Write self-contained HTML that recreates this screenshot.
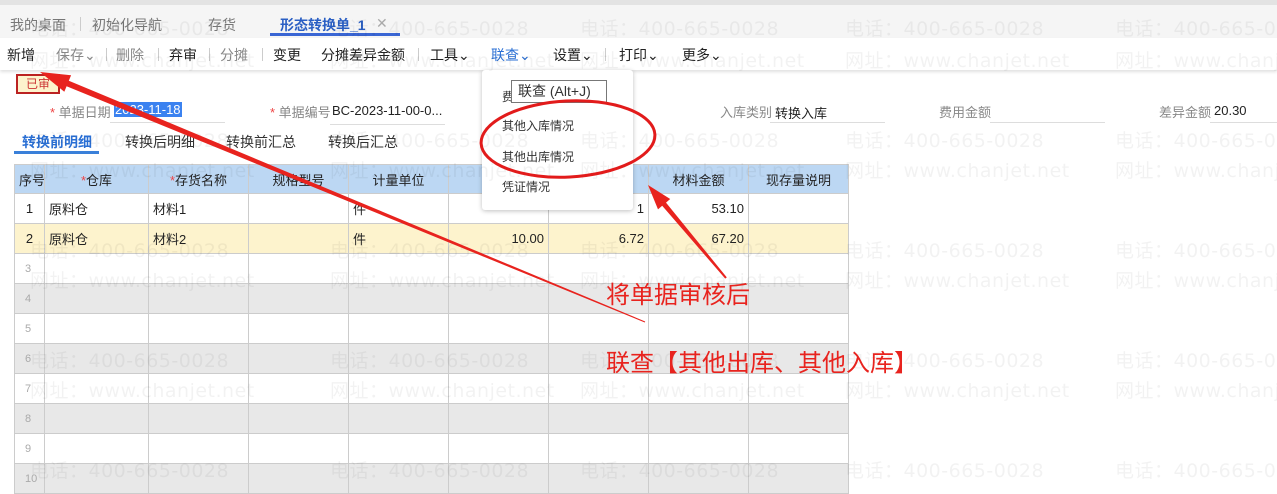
<!DOCTYPE html>
<html><head><meta charset="utf-8"><style>
*{margin:0;padding:0;box-sizing:border-box}
body{width:1277px;height:491px;overflow:hidden;background:#fff;font-family:"Liberation Sans","Noto Sans CJK SC",sans-serif;font-size:13px;color:#333;position:relative}
.abs{position:absolute}
.tabs{left:0;top:0;width:1277px;height:38px;background:#f5f5f5;border-top:5px solid #e3e3e3}
.tabs span{position:absolute;top:10px;font-size:14px;color:#777}
.tb{left:0;top:38px;width:1277px;height:32px;background:#fff;box-shadow:0 2px 3px rgba(0,0,0,.12)}
.tb span{position:absolute;top:7px;font-size:14px;color:#222}
.tb .g{color:#888}.tb i{position:absolute;top:10px;width:1px;height:13px;background:#ccc}
.wm{position:absolute;font-size:19px;color:rgba(0,0,0,.05);white-space:nowrap;font-family:"DejaVu Sans","Noto Sans CJK SC",sans-serif;letter-spacing:.5px}
table{position:absolute;left:14px;top:164px;width:834px;border-collapse:collapse;table-layout:fixed}
td{border:1px solid #ccc;height:30px;padding:0 4px;font-size:13px;color:#222;white-space:nowrap;overflow:hidden}
tr.h td{background:#bcd7f3;text-align:center;height:29px}
tr.y td{background:#fdf3cd}
tr.gr td{background:#e8e8e8}
td.n{color:#aaa;font-size:11px;padding-left:10px}
.r{text-align:right}
.lbl{position:absolute;font-size:13px;color:#888}
.ul{position:absolute;height:1px;background:#ddd}
</style></head><body>
<div class="abs tabs">
<span style="left:10px">我的桌面</span><span style="left:92px">初始化导航</span><span style="left:208px">存货</span>
<span style="left:280px;color:#2a5fc4;font-weight:bold">形态转换单_1</span><span style="left:376px;color:#aaa">✕</span>
<div class="abs" style="left:270px;top:28px;width:130px;height:3px;background:#3a66d4"></div>
<div class="abs" style="left:80px;top:12px;width:1px;height:14px;background:#ccc"></div>
</div>
<div class="abs tb">
<span style="left:7px">新增</span><span class="g" style="left:56px">保存⌄</span><i style="left:106px"></i><span class="g" style="left:116px">删除</span><i style="left:158px"></i><span style="left:169px">弃审</span><i style="left:209px"></i><span class="g" style="left:220px">分摊</span><i style="left:262px"></i><span style="left:273px">变更</span><span style="left:321px">分摊差异金额</span><i style="left:418px"></i><span style="left:430px">工具⌄</span><span style="left:491px;color:#2a6fd4">联查⌄</span><span style="left:553px">设置⌄</span><i style="left:605px"></i><span style="left:619px">打印⌄</span><span style="left:682px">更多⌄</span>
</div>
<div class="abs" style="left:16px;top:74px;width:44px;height:20px;border:2px solid #b22;background:#fdf3cd;color:#c33;font-size:12px;text-align:center;line-height:16px">已审</div>
<div class="lbl" style="left:50px;top:102px"><b style="color:#e44;font-weight:normal">*</b> 单据日期</div>
<div class="abs" style="left:114px;top:102px;background:#3b82f0;color:#fff;padding:0 1px;font-size:13px">2023-11-18</div>
<div class="ul" style="left:110px;top:122px;width:115px"></div>
<div class="lbl" style="left:270px;top:102px"><b style="color:#e44;font-weight:normal">*</b> 单据编号</div>
<div class="abs" style="left:332px;top:103px;color:#222">BC-2023-11-00-0...</div>
<div class="ul" style="left:330px;top:124px;width:115px"></div>
<div class="lbl" style="left:720px;top:102px">入库类别</div><div class="abs" style="left:775px;top:103px;color:#222">转换入库</div><div class="ul" style="left:770px;top:122px;width:115px"></div>
<div class="lbl" style="left:939px;top:102px">费用金额</div><div class="ul" style="left:990px;top:122px;width:115px"></div>
<div class="lbl" style="left:1159px;top:102px">差异金额</div><div class="abs" style="left:1214px;top:103px;color:#222">20.30</div><div class="ul" style="left:1210px;top:122px;width:67px"></div>
<div class="abs" style="left:22px;top:132px;font-size:14px;color:#2a6fd4;font-weight:bold">转换前明细</div>
<div class="abs" style="left:14px;top:151px;width:85px;height:3px;background:#3a80d9"></div>
<div class="abs" style="left:125px;top:132px;font-size:14px">转换后明细</div>
<div class="abs" style="left:226px;top:132px;font-size:14px">转换前汇总</div>
<div class="abs" style="left:328px;top:132px;font-size:14px">转换后汇总</div>
<table>
<colgroup><col style="width:30px"><col style="width:104px"><col style="width:100px"><col style="width:100px"><col style="width:100px"><col style="width:100px"><col style="width:100px"><col style="width:100px"><col style="width:100px"></colgroup>
<tr class="h"><td>序号</td><td><b style="color:#e44;font-weight:normal">*</b>仓库</td><td><b style="color:#e44;font-weight:normal">*</b>存货名称</td><td>规格型号</td><td>计量单位</td><td></td><td></td><td>材料金额</td><td>现存量说明</td></tr>
<tr><td style="text-align:center">1</td><td>原料仓</td><td>材料1</td><td></td><td>件</td><td></td><td class="r">1</td><td class="r">53.10</td><td></td></tr>
<tr class="y"><td style="text-align:center">2</td><td>原料仓</td><td>材料2</td><td></td><td>件</td><td class="r">10.00</td><td class="r">6.72</td><td class="r">67.20</td><td></td></tr>
<tr><td class="n">3</td><td></td><td></td><td></td><td></td><td></td><td></td><td></td><td></td></tr>
<tr class="gr"><td class="n">4</td><td></td><td></td><td></td><td></td><td></td><td></td><td></td><td></td></tr>
<tr><td class="n">5</td><td></td><td></td><td></td><td></td><td></td><td></td><td></td><td></td></tr>
<tr class="gr"><td class="n">6</td><td></td><td></td><td></td><td></td><td></td><td></td><td></td><td></td></tr>
<tr><td class="n">7</td><td></td><td></td><td></td><td></td><td></td><td></td><td></td><td></td></tr>
<tr class="gr"><td class="n">8</td><td></td><td></td><td></td><td></td><td></td><td></td><td></td><td></td></tr>
<tr><td class="n">9</td><td></td><td></td><td></td><td></td><td></td><td></td><td></td><td></td></tr>
<tr class="gr"><td class="n">10</td><td></td><td></td><td></td><td></td><td></td><td></td><td></td><td></td></tr>
</table>
<div class="abs" style="left:482px;top:70px;width:151px;height:140px;background:#fff;border-radius:3px;box-shadow:0 1px 5px rgba(0,0,0,.25)">
<div class="abs" style="left:20px;top:18px;font-size:12px">费</div>
<div class="abs" style="left:20px;top:47px;font-size:12px">其他入库情况</div>
<div class="abs" style="left:20px;top:78px;font-size:12px">其他出库情况</div>
<div class="abs" style="left:20px;top:108px;font-size:12px">凭证情况</div>
</div>
<div class="abs" style="left:511px;top:80px;width:96px;height:23px;border:1px solid #777;background:#fff;font-size:14px;color:#333;padding-left:6px;line-height:21px">联查 (Alt+J)</div>
<div id="wms"></div>
<svg class="abs" style="left:0;top:0" width="1277" height="491">
<ellipse cx="568" cy="139" rx="87" ry="38" fill="none" stroke="#e21b1b" stroke-width="3" transform="rotate(-3 568 139)"/>
<polygon points="40,72 71.1,75.2 68.8,80.7 645.2,321.5 644.8,322.5 66.6,86.3 64.3,91.8" fill="#e8231e"/>
<polygon points="648,185 670.2,199 666,202.6 726.8,277.4 725.2,278.6 662.2,205.8 658,209.4" fill="#e8231e"/>
<text x="606" y="303" font-size="24" fill="#e8231e" font-family="Noto Sans CJK SC">将单据审核后</text>
<text x="606" y="371" font-size="24" fill="#e8231e" font-family="Noto Sans CJK SC">联查【其他出库、其他入库】</text>
</svg>
<script>
var h='',xs=[30,330,580,845,1115],ys=[[28,'电话：400-665-0028'],[60,'网址：www.chanjet.net'],[140,'电话：400-665-0028'],[170,'网址：www.chanjet.net'],[250,'电话：400-665-0028'],[280,'网址：www.chanjet.net'],[360,'电话：400-665-0028'],[390,'网址：www.chanjet.net'],[470,'电话：400-665-0028']];
ys.forEach(function(r){xs.forEach(function(x){h+='<div class="wm" style="left:'+x+'px;top:'+(r[0]-14)+'px">'+r[1]+'</div>';});});
document.getElementById('wms').innerHTML=h;
</script>
</body></html>
